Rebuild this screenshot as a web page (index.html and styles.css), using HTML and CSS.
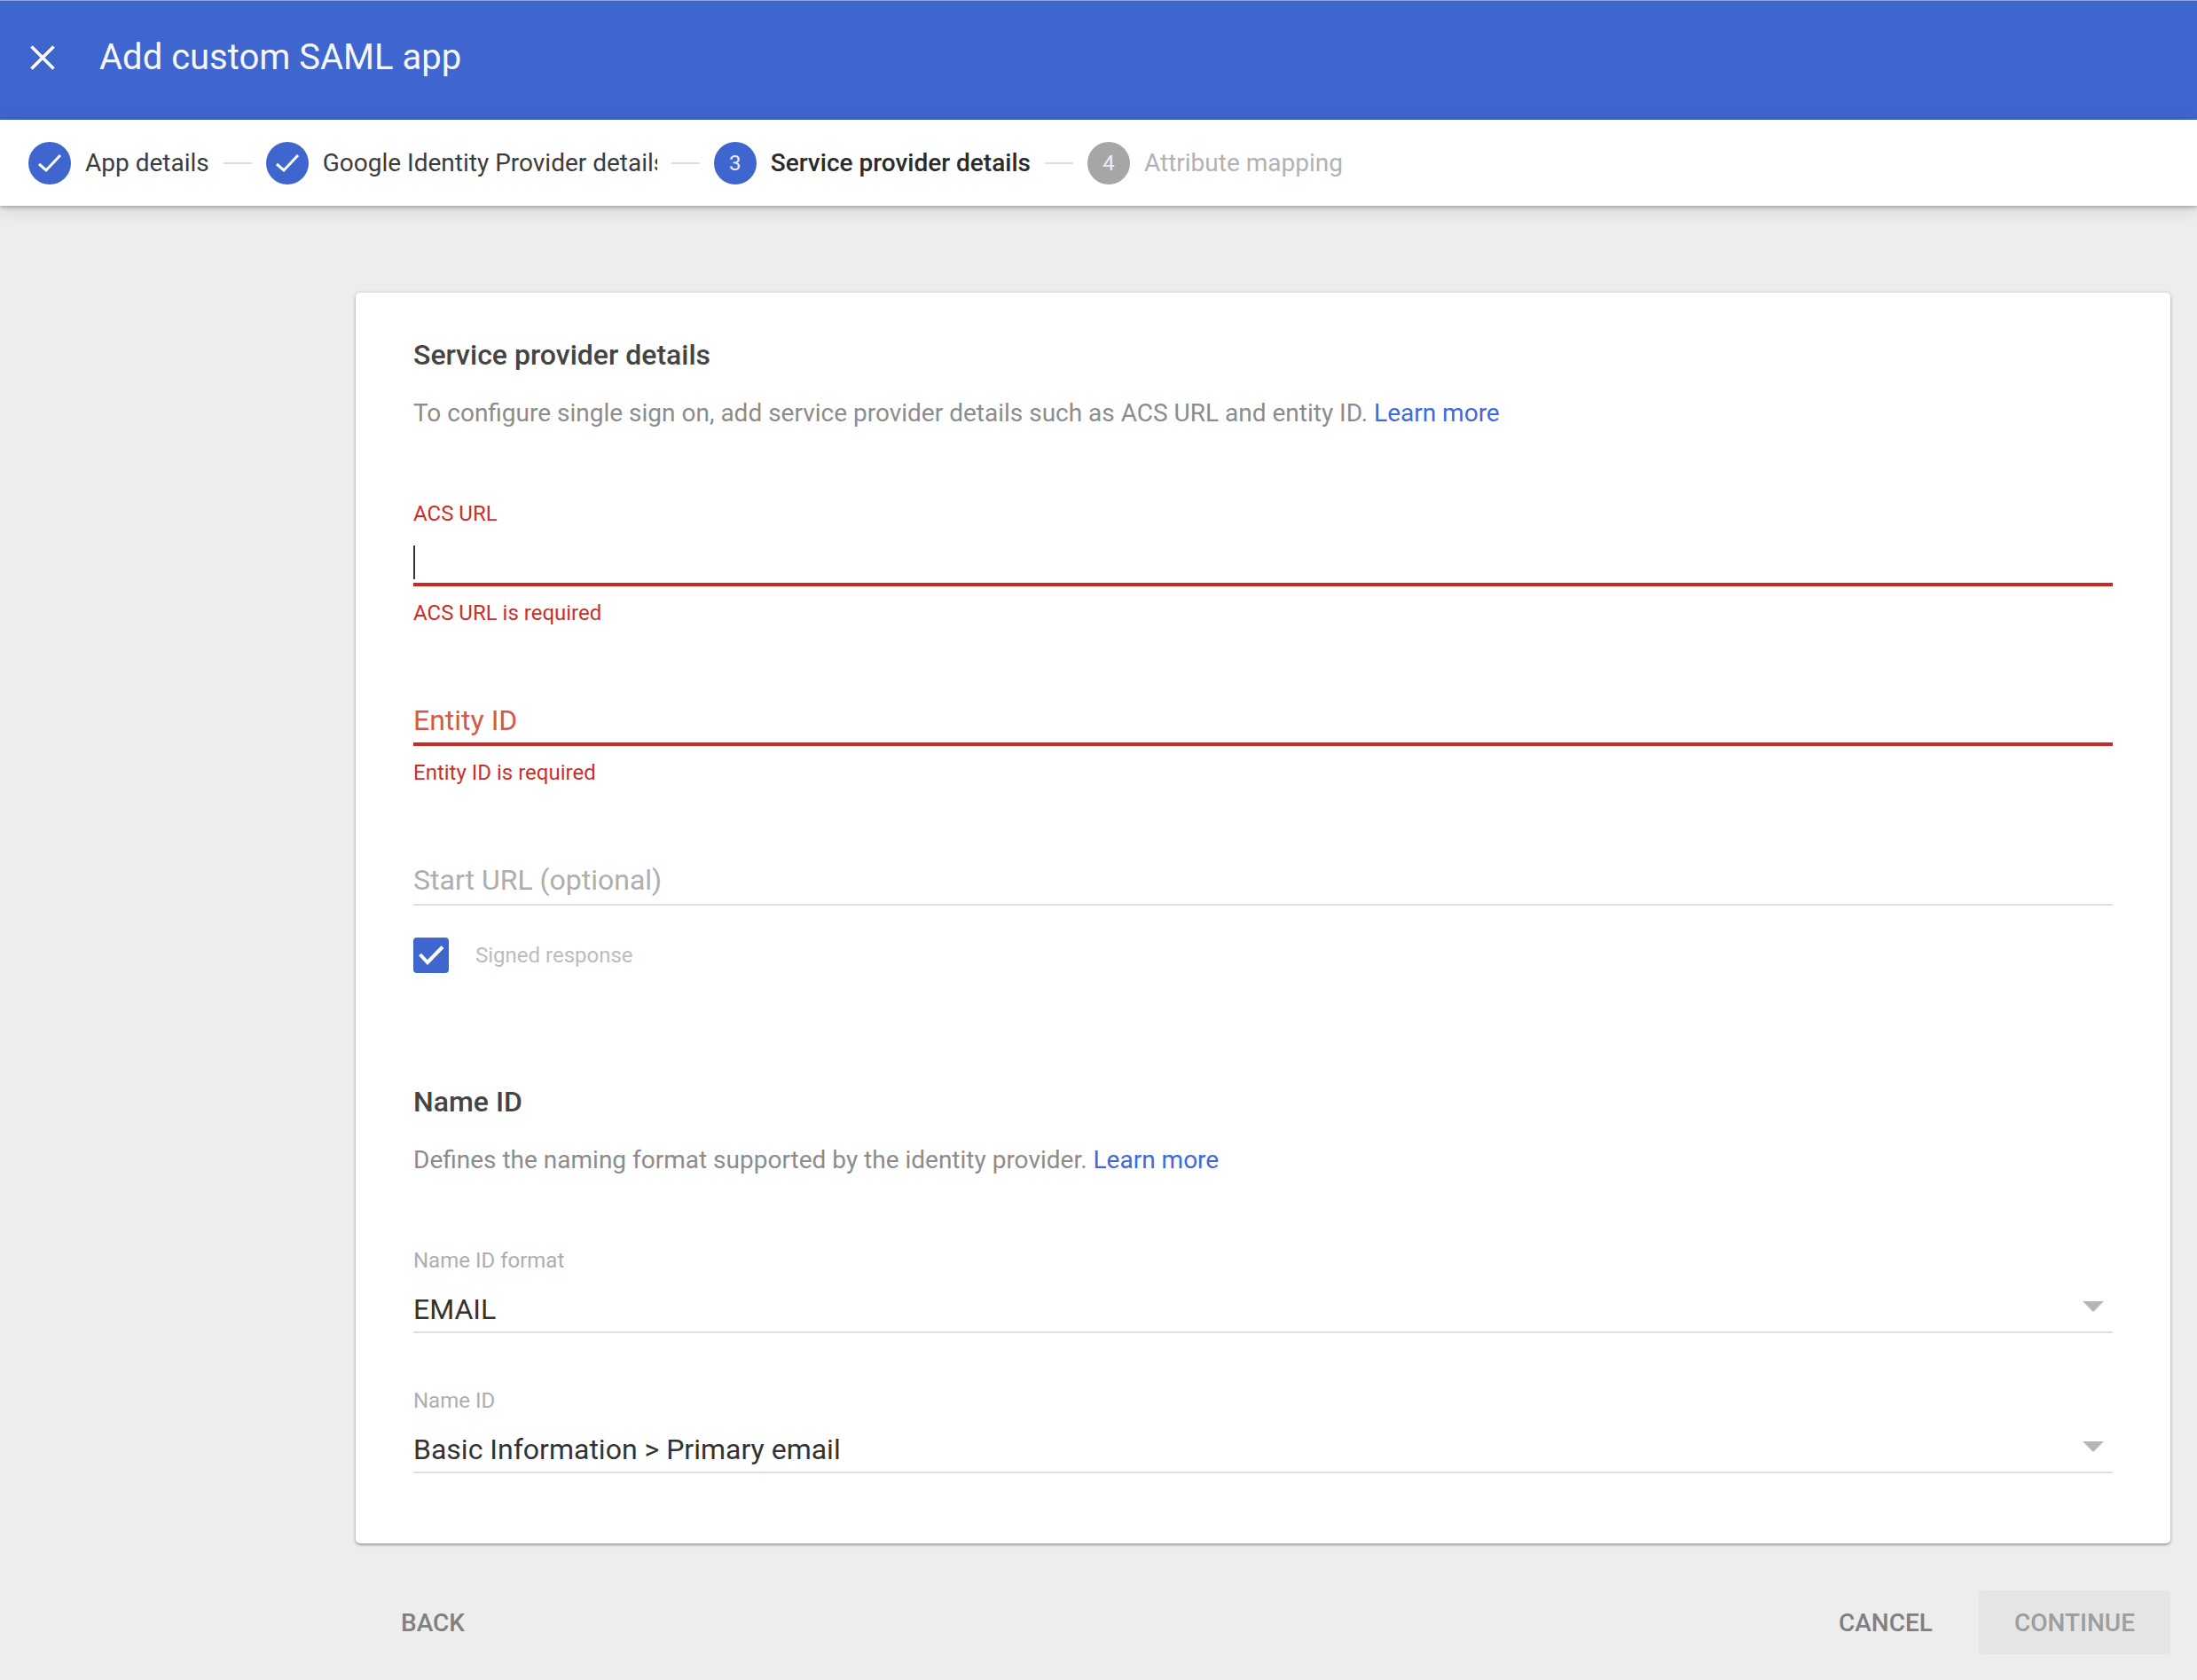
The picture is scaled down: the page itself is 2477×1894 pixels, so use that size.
FILE: index.html
```html
<!DOCTYPE html>
<html lang="en">
<head>
    <meta charset="UTF-8">
    <meta name="viewport" content="width=device-width, initial-scale=1.0">
    <title>Add custom SAML app</title>
    <link rel="stylesheet" href="styles.css">
</head>
<body>
    <header class="topbar">
        <button type="button" class="close-btn" aria-label="Close">
            <svg viewBox="0 0 28 28" width="28" height="28"><path d="M1.500 1.500L26.500 26.500M26.500 1.500L1.500 26.500" fill="none" stroke="#fff" stroke-width="3.500"/></svg>
        </button>
        <h1>Add custom SAML app</h1>
    </header>

    <!-- Wizard steps -->
    <nav>
        <ol class="steps">
            <li class="step">
                <span class="circle"><svg viewBox="0 0 48 48" width="48" height="48"><path d="M12 25L20 32L36 15" fill="none" stroke="#fff" stroke-width="3"/></svg></span>
                <span class="step-label">App details</span>
            </li>
            <li class="step">
                <span class="circle"><svg viewBox="0 0 48 48" width="48" height="48"><path d="M12 25L20 32L36 15" fill="none" stroke="#fff" stroke-width="3"/></svg></span>
                <span class="step-label clipped">Google Identity Provider details</span>
            </li>
            <li class="step current" aria-current="step">
                <span class="circle">3</span>
                <span class="step-label">Service provider details</span>
            </li>
            <li class="step pending">
                <span class="circle">4</span>
                <span class="step-label">Attribute mapping</span>
            </li>
        </ol>
    </nav>

    <main>
        <form id="saml-form">
            <div class="card">
                <section>
                    <h2>Service provider details</h2>
                    <p>To configure single sign on, add service provider details such as ACS URL and entity ID. <a href="#">Learn more</a></p>

                    <div class="field invalid first">
                        <label for="acs-url">ACS URL</label>
                        <div class="input-wrap">
                            <input type="text" id="acs-url">
                            <span class="caret"></span>
                        </div>
                        <div class="error">ACS URL is required</div>
                    </div>

                    <div class="field invalid floating">
                        <label for="entity-id">Entity ID</label>
                        <input type="text" id="entity-id">
                        <div class="error">Entity ID is required</div>
                    </div>

                    <div class="field floating">
                        <label for="start-url">Start URL (optional)</label>
                        <input type="text" id="start-url">
                    </div>

                    <div class="check-row">
                        <input type="checkbox" id="signed" checked>
                        <svg class="tick" viewBox="0 0 40 40" width="40" height="40"><path d="M7.500 19L16 28L33 10.500" fill="none" stroke="#fff" stroke-width="4"/></svg>
                        <label for="signed">Signed response</label>
                    </div>
                </section>

                <section class="name-id">
                    <h2>Name ID</h2>
                    <p>Defines the naming format supported by the identity provider. <a href="#">Learn more</a></p>

                    <div class="field first">
                        <label for="name-format">Name ID format</label>
                        <div class="select-wrap">
                            <select id="name-format"><option>EMAIL</option></select>
                        </div>
                    </div>

                    <div class="field second">
                        <label for="name-id">Name ID</label>
                        <div class="select-wrap">
                            <select id="name-id"><option>Basic Information &gt; Primary email</option></select>
                        </div>
                    </div>
                </section>
            </div>

            <div class="actions">
                <button type="button" class="btn back">Back</button>
                <button type="button" class="btn">Cancel</button>
                <button type="submit" class="btn continue" disabled>Continue</button>
            </div>
        </form>
    </main>
</body>
</html>
```
FILE: styles.css
```css
* {
    box-sizing: border-box;
}

body {
    margin: 0;
    min-height: 100vh;
    background-color: #ededed;
    font-family: Roboto, "Liberation Sans", sans-serif;
    font-size: 28px;
    line-height: 40px;
    color: #3c3c3c;
}

/* Blue header */
.topbar {
    display: flex;
    align-items: center;
    gap: 50px;
    height: 135px;
    padding: 0 34px 7px;
    border-top: 1px solid #8ba5e3;
    background-color: #3f66cf;
    color: #f5f7fd;
}

.close-btn {
    display: flex;
    padding: 0;
    border: none;
    background: none;
    cursor: pointer;
}

h1 {
    margin: 0;
    font-size: 40px;
    font-weight: 400;
}

/* Stepper */
.steps {
    display: flex;
    align-items: center;
    height: 97px;
    margin: 0;
    padding: 0 32px;
    list-style: none;
    background-color: #fff;
    box-shadow: 0 2px 4px rgba(0, 0, 0, 0.25), 0 4px 20px rgba(0, 0, 0, 0.12);
}

.step {
    display: flex;
    align-items: center;
    gap: 16px;
    white-space: nowrap;
}

/* dash between two steps */
.step:not(:last-child)::after {
    content: "";
    width: 32px;
    height: 2px;
    margin-right: 16px;
    background-color: #dedede;
}

.circle {
    display: flex;
    align-items: center;
    justify-content: center;
    width: 48px;
    height: 48px;
    border-radius: 50%;
    background-color: #3f66cf;
    color: #e8edfa;
    font-size: 24px;
}

.clipped {
    width: 377px;
    overflow: hidden;
}

.current .step-label {
    font-weight: 500;
    color: #2b2b2b;
}

.pending .circle {
    background-color: #a6a6a6;
}

.pending .step-label {
    color: #b2b2b2;
}

/* Form card */
main {
    padding: 98px 30px 28px 401px;
}

.card {
    padding: 50px 65px 79px;
    border-radius: 5px;
    background-color: #fff;
    box-shadow: 0 2px 3px rgba(0, 0, 0, 0.28), 0 0 4px rgba(0, 0, 0, 0.14);
}

.name-id {
    margin-top: 125px;
}

h2 {
    margin: 0 0 26px;
    font-size: 32px;
    font-weight: 500;
    color: #444;
}

p {
    margin: 0;
    color: #8c8c8c;
}

a {
    color: #4169dc;
    text-decoration: none;
}

/* Fields */
.field {
    position: relative;
    margin-top: 82px;
}

.field.first {
    margin-top: 77px;
}

.field.second {
    margin-top: 60px;
}

.field label,
.error {
    display: block;
    font-size: 24px;
    line-height: 32px;
    color: #aeaeae;
}

.field label {
    margin-bottom: 14px;
}

.field.invalid label,
.error {
    color: #cb2f2a;
}

.error {
    margin-top: 14px;
}

/* label sits on the empty input */
.field.floating label {
    position: absolute;
    top: 0;
    left: 0;
    margin: 0;
    font-size: 32px;
    line-height: 46px;
}

.field.invalid.floating label {
    color: #d3594f;
}

.field input,
.field select {
    display: block;
    width: 100%;
    height: 52px;
    padding: 0;
    border: none;
    border-bottom: 2px solid #e0e0e0;
    border-radius: 0;
    outline: none;
    background: transparent;
    font-family: inherit;
    font-size: 32px;
    color: #333;
    appearance: none;
}

.field.invalid input {
    border-bottom: 4px solid #c92a25;
}

.input-wrap,
.select-wrap {
    position: relative;
}

/* text cursor of the active field */
.input-wrap input {
    caret-color: transparent;
}

.caret {
    position: absolute;
    top: 6px;
    left: 0;
    width: 2px;
    height: 38px;
    background-color: #333;
}

/* dropdown arrow */
.select-wrap::after {
    content: "";
    position: absolute;
    top: 16px;
    right: 10px;
    border: 12px solid transparent;
    border-top-color: #b5b5b5;
    border-bottom: none;
    pointer-events: none;
}

/* Checkbox */
.check-row {
    position: relative;
    display: flex;
    align-items: center;
    gap: 30px;
    margin-top: 36px;
    font-size: 24px;
    color: #bcbcbc;
}

.check-row input {
    width: 40px;
    height: 40px;
    margin: 0;
    border-radius: 4px;
    background-color: #3f66cf;
    appearance: none;
}

.tick {
    position: absolute;
    left: 0;
    top: 0;
    pointer-events: none;
}

/* Bottom buttons */
.actions {
    display: flex;
    gap: 12px;
    margin-top: 53px;
    padding-left: 11px;
}

.btn {
    height: 72px;
    padding: 0 40px;
    border: none;
    border-radius: 4px;
    background: none;
    font-family: inherit;
    font-size: 28px;
    font-weight: 500;
    text-transform: uppercase;
    color: #808080;
    cursor: pointer;
}

.btn.back {
    margin-right: auto;
}

.btn.continue {
    background-color: #e5e5e5;
    color: #9e9e9e;
    cursor: default;
}
```
